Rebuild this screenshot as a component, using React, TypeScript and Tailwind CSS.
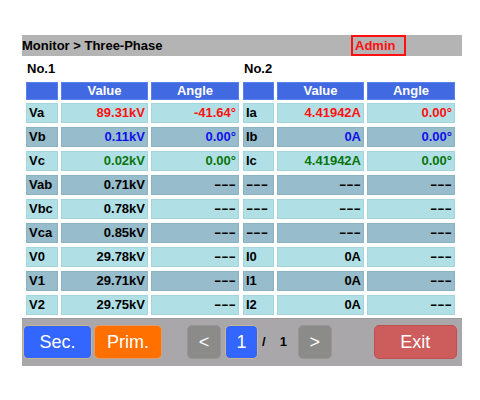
import React from 'react';

type Row = { label: string; value: string; angle: string; color?: string };

const group1: Row[] = [
  { label: 'Va', value: '89.31kV', angle: '-41.64°', color: 'text-[#ff1010]' },
  { label: 'Vb', value: '0.11kV', angle: '0.00°', color: 'text-[#1010ee]' },
  { label: 'Vc', value: '0.02kV', angle: '0.00°', color: 'text-[#0a740a]' },
  { label: 'Vab', value: '0.71kV', angle: '---' },
  { label: 'Vbc', value: '0.78kV', angle: '---' },
  { label: 'Vca', value: '0.85kV', angle: '---' },
  { label: 'V0', value: '29.78kV', angle: '---' },
  { label: 'V1', value: '29.71kV', angle: '---' },
  { label: 'V2', value: '29.75kV', angle: '---' },
];

const group2: Row[] = [
  { label: 'Ia', value: '4.41942A', angle: '0.00°', color: 'text-[#ff1010]' },
  { label: 'Ib', value: '0A', angle: '0.00°', color: 'text-[#1010ee]' },
  { label: 'Ic', value: '4.41942A', angle: '0.00°', color: 'text-[#0a740a]' },
  { label: '---', value: '---', angle: '---' },
  { label: '---', value: '---', angle: '---' },
  { label: '---', value: '---', angle: '---' },
  { label: 'I0', value: '0A', angle: '---' },
  { label: 'I1', value: '0A', angle: '---' },
  { label: 'I2', value: '0A', angle: '---' },
];

const Dash: React.FC<{ text: string; left?: boolean }> = ({ text, left }) =>
  text === '---' ? (
    <span className={`inline-block scale-x-[1.7] ${left ? 'origin-left' : 'origin-right'}`}>---</span>
  ) : (
    <>{text}</>
  );

const Group: React.FC<{ title: string; rows: Row[]; first: number }> = ({ title, rows, first }) => (
  <div className="flex flex-col">
    <div className="h-[26px] flex items-center pl-[1px] text-[13px] font-bold text-black">{title}</div>
    <div className="flex flex-col gap-[4px]">
      <div className="flex gap-[3px] h-[18px] -mb-[1px]">
        <div className={`${first ? 'w-[32px]' : 'w-[31px]'} bg-[#4169e1] border border-[#5a80ee]`} />
        <div className="w-[87px] bg-[#4169e1] border border-[#5a80ee] flex items-center justify-center text-white text-[13px] font-bold">Value</div>
        <div className="w-[88px] bg-[#4169e1] border border-[#5a80ee] flex items-center justify-center text-white text-[13px] font-bold">Angle</div>
      </div>
      {rows.map((r, i) => {
        const bg = i % 2 === 0 ? 'bg-[#b0e0e6] border-[#a4d4dc]' : 'bg-[#97bccb] border-[#8cb2c2]';
        const tc = r.color ?? 'text-black';
        return (
          <div key={i} className="flex gap-[3px] h-[20px] text-[13px] font-bold">
            <div className={`${first ? 'w-[32px]' : 'w-[31px]'} ${bg} border flex items-center pl-[2px] text-black`}>
              <Dash text={r.label} left />
            </div>
            <div className={`w-[87px] ${bg} border flex items-center justify-end pr-[2px] ${tc}`}>
              <Dash text={r.value} />
            </div>
            <div className={`w-[88px] ${bg} border flex items-center justify-end pr-[2px] ${r.angle === '---' ? 'text-black' : tc}`}>
              <Dash text={r.angle} />
            </div>
          </div>
        );
      })}
    </div>
  </div>
);

export default function App() {
  return (
    <div
      className="w-[480px] h-[400px] bg-white pt-[35px] pl-[22px]"
      style={{ fontFamily: '"Liberation Sans", Arial, sans-serif' }}
    >
      <div className="w-[440px] flex flex-col">
        <div className="h-[21px] bg-[#b4b4b4] flex items-center">
          <span className="text-[13px] font-bold text-black">Monitor &gt; Three-Phase</span>
          <div className="ml-auto mr-[56px] w-[55px] h-[21px] border-2 border-[#ff1010] flex items-center pl-[2px]">
            <span className="text-[13px] font-bold text-[#ff1010]">Admin</span>
          </div>
        </div>
        <div className="h-[262px] bg-white pl-[4px] flex gap-[4px]">
          <Group title="No.1" rows={group1} first={1} />
          <Group title="No.2" rows={group2} first={0} />
        </div>
        <div className="h-[48px] bg-[#a9a7a9] border-t border-[#9a989a] flex items-start pt-[6px] pl-[1px]">
          <button className="w-[69px] h-[34px] rounded-[5px] bg-[#3366ff] border border-[#c9b590] text-white text-[18px] flex items-center justify-center">Sec.</button>
          <button className="ml-[2px] w-[68px] h-[34px] rounded-[5px] bg-[#ff7000] border border-[#d8a070] text-white text-[18px] flex items-center justify-center">Prim.</button>
          <button className="ml-[25px] w-[34px] h-[34px] rounded-[5px] bg-[#8b8b89] border border-[#969694] text-white text-[18px] flex items-center justify-center">&lt;</button>
          <button className="ml-[4px] w-[33px] h-[34px] rounded-[5px] bg-[#3366ff] border border-[#c9b590] text-white text-[18px] flex items-center justify-center">1</button>
          <span className="ml-[4px] h-[34px] flex items-center text-[13px] font-bold text-black">/</span>
          <span className="ml-[14px] h-[34px] flex items-center text-[13px] font-bold text-black">1</span>
          <button className="ml-[11px] w-[34px] h-[34px] rounded-[5px] bg-[#8b8b89] border border-[#969694] text-white text-[18px] flex items-center justify-center">&gt;</button>
          <button className="ml-[42px] w-[83px] h-[34px] rounded-[5px] bg-[#cd5c5c] border border-[#c05050] text-white text-[18px] flex items-center justify-center">Exit</button>
        </div>
      </div>
    </div>
  );
}
